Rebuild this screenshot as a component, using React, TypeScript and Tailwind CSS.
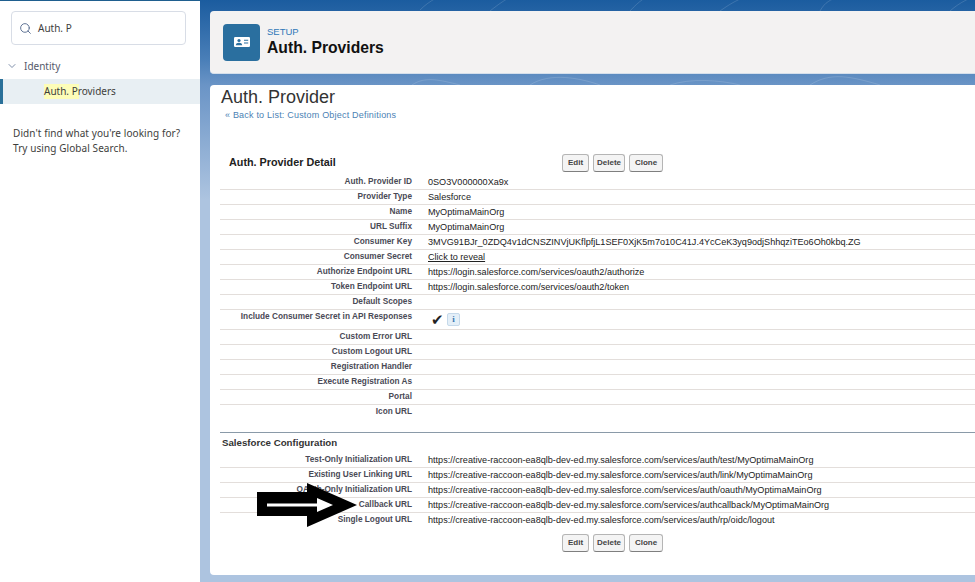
import * as React from "react";
import { ChevronDown, Search } from "lucide-react";

type Row = { label: string; value?: React.ReactNode; tall?: boolean };

const detailRows: Row[] = [
  { label: "Auth. Provider ID", value: "0SO3V000000Xa9x" },
  { label: "Provider Type", value: "Salesforce" },
  { label: "Name", value: "MyOptimaMainOrg" },
  { label: "URL Suffix", value: "MyOptimaMainOrg" },
  {
    label: "Consumer Key",
    value: "3MVG91BJr_0ZDQ4v1dCNSZINVjUKflpfjL1SEF0XjK5m7o10C41J.4YcCeK3yq9odjShhqziTEo6Oh0kbq.ZG",
  },
  { label: "Consumer Secret", value: <span className="underline">Click to reveal</span> },
  { label: "Authorize Endpoint URL", value: "https://login.salesforce.com/services/oauth2/authorize" },
  { label: "Token Endpoint URL", value: "https://login.salesforce.com/services/oauth2/token" },
  { label: "Default Scopes" },
  {
    label: "Include Consumer Secret in API Responses",
    tall: true,
    value: (
      <span className="flex items-center gap-[3px] pl-[3px] pt-[1px]">
        <span className="text-[15px] leading-none">✔</span>
        <span className="flex h-[13px] w-[13px] items-center justify-center rounded-[2px] border border-[#c5d9ea] bg-[#e4eff8] font-['Liberation_Serif',serif] text-[9px] font-bold leading-none text-[#3a78b0]">
          i
        </span>
      </span>
    ),
  },
  { label: "Custom Error URL" },
  { label: "Custom Logout URL" },
  { label: "Registration Handler" },
  { label: "Execute Registration As" },
  { label: "Portal" },
  { label: "Icon URL" },
];

const base = "https://creative-raccoon-ea8qlb-dev-ed.my.salesforce.com/services";

const configRows: Row[] = [
  { label: "Test-Only Initialization URL", value: `${base}/auth/test/MyOptimaMainOrg` },
  { label: "Existing User Linking URL", value: `${base}/auth/link/MyOptimaMainOrg` },
  { label: "OAuth-Only Initialization URL", value: `${base}/auth/oauth/MyOptimaMainOrg` },
  { label: "Callback URL", value: `${base}/authcallback/MyOptimaMainOrg` },
  { label: "Single Logout URL", value: `${base}/auth/rp/oidc/logout` },
];

const actions = [
  { label: "Edit", width: "w-[27px]" },
  { label: "Delete", width: "w-[32px]" },
  { label: "Clone", width: "w-[34px]" },
];

function DetailRows({ rows }: { rows: Row[] }) {
  return (
    <div>
      {rows.map((row, index) => (
        <div
          key={row.label}
          className={`flex ${row.tall ? "h-[20px]" : "h-[15px]"} ${
            index === rows.length - 1 ? "" : "border-b border-[#e3dedb]"
          }`}
        >
          <div className="w-[192px] shrink-0 pt-[1px] text-right text-[8.25px] font-bold leading-[12px] text-[#4a4a56]">
            {row.label}
          </div>
          <div className="ml-[16px] whitespace-nowrap pt-[1px] text-[9.1px] leading-[13px] text-[#222]">
            {row.value}
          </div>
        </div>
      ))}
    </div>
  );
}

function ActionButtons() {
  return (
    <div className="flex gap-[4px]">
      {actions.map((action) => (
        <button
          key={action.label}
          className={`h-[18px] rounded-[3px] border border-[#b5b5b5] border-b-[#7f7f7f] bg-[#f4f4f4] text-[8px] font-bold leading-none text-[#444] ${action.width}`}
        >
          {action.label}
        </button>
      ))}
    </div>
  );
}

function ContourPattern() {
  return (
    <svg className="absolute inset-0 h-full w-full" fill="none" stroke="#ffffff" strokeOpacity="0.14" strokeWidth="1">
      <path d="M220 10 C230 0 240 -4 250 -8 M290 11 C300 3 305 0 312 -4 M430 11 C440 0 445 -2 452 -6 M520 11 C530 4 535 1 545 -3 M620 11 C625 2 630 0 640 -4 M750 11 C760 2 770 -2 780 -6 M880 11 C890 3 900 0 910 -4" />
      <path d="M212 85 C225 76 240 80 260 85 M330 85 C350 72 380 78 400 85 M470 85 C490 78 520 80 540 85 M610 85 C630 72 650 76 680 85 M780 85 C800 72 840 72 860 85 M905 85 C920 76 950 76 970 85" />
    </svg>
  );
}

export default function App() {
  return (
    <div className="relative flex h-[582px] w-[975px] overflow-hidden bg-white font-['Liberation_Sans',Arial,sans-serif]">
      <aside className="w-[200px] shrink-0 border-t border-[#1f5f8f] bg-white font-['Noto_Sans',sans-serif]">
        <div className="pl-[11px] pr-[14px] pt-[10px]">
          <div className="flex h-[34px] items-center rounded-[4px] border border-[#d8dde6] pl-[7px]">
            <Search size={13} strokeWidth={1.7} className="text-[#54698d]" />
            <span className="ml-[6px] text-[10px] text-[#3e3e3c]">Auth. P</span>
          </div>
        </div>
        <div className="mt-[9px] flex h-[24px] items-center pl-[6px] text-[10px] text-[#54596a]">
          <ChevronDown size={12} strokeWidth={1.5} className="text-[#54698d]" />
          <span className="ml-[6px]">Identity</span>
        </div>
        <div className="mt-[1px] flex h-[25px] items-center border-l-[3px] border-[#2a7099] bg-[#e8eff3] pl-[41px] text-[10px] text-[#3e3e3c]">
          <span className="bg-[#fdfdb8] pr-[1px]">Auth. P</span>
          <span className="ml-[-1px]">roviders</span>
        </div>
        <p className="mt-[22px] px-[13px] text-[10px] leading-[15px] tracking-[0.08px] text-[#3e3e3c]">
          Didn't find what you're looking for?
          <br />
          Try using Global Search.
        </p>
      </aside>

      <main className="relative flex min-w-0 flex-1 flex-col bg-[linear-gradient(180deg,#1b5c9f_0px,#4a7fb8_60px,#6a94c6_85px,#adc4e0_200px,#adc4e0_582px)] pl-[10px] pt-[11px]">
        <ContourPattern />
        <header className="relative flex h-[63px] items-center rounded-l-[4px] border-b border-[#d5dfeb] bg-[#f3f2f2] pl-[13px]">
          <div className="flex h-[37px] w-[37px] items-center justify-center rounded-[4px] bg-[#2a6f9f]">
            <svg width="16" height="10" viewBox="0 0 16 10" fill="#ffffff">
              <rect width="16" height="10" rx="1.200" />
              <circle cx="5" cy="3.500" r="1.600" fill="#2a6f9f" />
              <path d="M1.800 8.200c0-1.700 1.400-2.500 3.200-2.500s3.200.8 3.200 2.500z" fill="#2a6f9f" />
              <path d="M10 2.800h4.200v1H10zM10 5.400h4.200v1H10z" fill="#2a6f9f" />
            </svg>
          </div>
          <div className="ml-[7px]">
            <div className="text-[9.500px] leading-[12px] text-[#2f78b8]">SETUP</div>
            <div className="text-[15.700px] font-bold leading-[20px] text-[#111]">Auth. Providers</div>
          </div>
        </header>

        <section className="relative mt-[11px] h-[490px] rounded-l-[4px] bg-white">
          <div className="pl-[11px] pt-[1px]">
            <h1 className="text-[18px] leading-[22px] text-[#333]">Auth. Provider</h1>
            <div className="mt-[1px] pl-[4px] text-[9px] leading-[12px] tracking-[0.2px] text-[#4b82b4]">
              « Back to List: Custom Object Definitions
            </div>
          </div>

          <div className="relative ml-[10px] mt-[33px] flex h-[18px] items-center">
            <span className="pb-[2px] pl-[9px] text-[10.800px] font-bold text-[#222]">Auth. Provider Detail</span>
            <div className="absolute left-[342px] top-0">
              <ActionButtons />
            </div>
          </div>

          <div className="ml-[10px] mt-[3px]">
            <DetailRows rows={detailRows} />
          </div>

          <div className="ml-[10px] mt-[12px] border-t border-[#8a9aa8] pl-[2px] pt-[3px] text-[9.700px] font-bold leading-[13px] text-[#333]">
            Salesforce Configuration
          </div>
          <div className="ml-[10px] mt-[4px]">
            <DetailRows rows={configRows} />
          </div>
          <div className="ml-[352px] mt-[6px]">
            <ActionButtons />
          </div>
        </section>

        <svg className="absolute left-[57px] top-[481px]" width="100" height="48" viewBox="0 0 100 48">
          <path d="M0 11 H50 V2 L100 24 L50 46 V35 H0 Z" fill="#000000" />
          <path d="M10 22.500 H60 V17 L76 24 L60 31 V25.500 H10 Z" fill="#ffffff" />
        </svg>
      </main>
    </div>
  );
}
